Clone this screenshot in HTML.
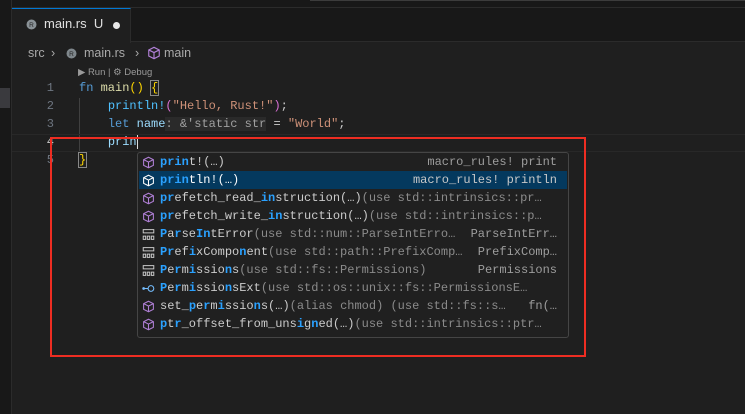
<!DOCTYPE html>
<html><head><style>
*{margin:0;padding:0;box-sizing:border-box}
body{width:745px;height:414px;background:#1f1f1f;overflow:hidden;position:relative;font-family:"Liberation Sans",sans-serif}
.abs{position:absolute}
.mono{font-family:"Liberation Mono","DejaVu Sans Mono",monospace;font-size:12px;white-space:pre}
.ln{position:absolute;left:40px;width:14px;text-align:right;color:#6e7681;font-family:"Liberation Mono",monospace;font-size:12px}
.code{position:absolute;left:79px}
.kw{color:#569cd6}.fn{color:#dcdcaa}.mac{color:#4fc1ff}.str{color:#ce9178}.br{color:#ffd700}.br2{color:#da70d6}.var{color:#9cdcfe}.hint{color:#a0a0a0;background:#2a2a2a}
.row{position:absolute;left:1px;right:1px;height:18px;line-height:18px;color:#cccccc}
.row .ic{position:absolute;left:3px;top:3px;width:13px;height:13px}
.row .t{position:absolute;left:21px}
.row .r{position:absolute;right:10px;color:#9d9d9d}
.m{color:#2aa1ff;font-weight:bold}
.g{color:#8b8b8b}
.sel{background:#04395e;color:#fff}
.sel .r{color:#c8c8c8}
</style></head><body>
<div class="abs" style="left:0;top:0;width:745px;height:42px;background:#181818;border-bottom:1px solid #2b2b2b"></div>
<div class="abs" style="left:0;top:7px;width:745px;height:1px;background:#2b2b2b"></div>
<div class="abs" style="left:310px;top:-2px;width:440px;height:3px;border:1px solid #3c3c3c"></div>
<div class="abs" style="left:0;top:0;width:12px;height:414px;background:#181818;border-right:1px solid #2b2b2b"></div>
<div class="abs" style="left:0;top:88px;width:10px;height:20px;background:#3a3a3e"></div>
<div class="abs" style="left:12px;top:8px;width:119px;height:35px;background:#1f1f1f;border-top:1px solid #0078d4;border-right:1px solid #2b2b2b"></div>
<svg class="abs" style="left:26px;top:19px" width="11" height="11" viewBox="0 0 11 11"><circle cx="5.5" cy="5.5" r="5" fill="#8a9297"/><text x="5.5" y="8" font-size="6.5" text-anchor="middle" fill="#1f1f1f" font-family="Liberation Sans">R</text></svg>
<div class="abs" style="left:44px;top:16px;font-size:13px;color:#e0e0e0">main.rs&nbsp; U</div>
<div class="abs" style="left:113px;top:22px;width:7px;height:7px;border-radius:50%;background:#e8e8e8"></div>
<div class="abs" style="left:28px;top:46px;font-size:12.5px;color:#a9a9a9">src</div>
<div class="abs" style="left:51px;top:46px;font-size:12.5px;color:#a9a9a9">›</div>
<div class="abs" style="left:84px;top:46px;font-size:12.5px;color:#a9a9a9">main.rs</div>
<div class="abs" style="left:135px;top:46px;font-size:12.5px;color:#a9a9a9">›</div>
<div class="abs" style="left:164px;top:46px;font-size:12.5px;color:#a9a9a9">main</div>
<svg class="abs" style="left:66px;top:48px" width="11" height="11" viewBox="0 0 11 11"><circle cx="5.5" cy="5.5" r="5" fill="#7f878c"/><text x="5.5" y="8" font-size="6.5" text-anchor="middle" fill="#1f1f1f">R</text></svg>
<svg class="abs" style="left:147px;top:46px" width="14" height="14" viewBox="0 0 16 16" fill="none" stroke="#b180d7" stroke-width="1.3"><path d="M8 1.5L14 4.5V11.5L8 14.5L2 11.5V4.5Z M2 4.5L8 7.5L14 4.5 M8 7.5V14.5"/></svg>
<div class="abs" style="left:78px;top:67px;font-size:9.5px;color:#9a9a9a">▶ Run | ⚙ Debug</div>

<div class="ln" style="top:81px">1</div>
<div class="ln" style="top:99px">2</div>
<div class="ln" style="top:117px">3</div>
<div class="ln" style="top:135px;color:#ccc">4</div>
<div class="ln" style="top:153px">5</div>
<div class="abs" style="left:79px;top:98px;width:1px;height:54px;background:#404040"></div>
<div class="abs" style="left:12px;top:134px;width:733px;height:18px;border-top:1px solid #282828;border-bottom:1px solid #282828"></div>
<div class="code mono" style="top:81px"><span class="kw">fn</span> <span class="fn">main</span><span class="br">()</span> <span class="br" style="outline:1px solid #888">{</span></div>
<div class="code mono" style="top:99px">    <span class="mac">println!</span><span class="br2">(</span><span class="str">"Hello, Rust!"</span><span class="br2">)</span><span style="color:#ccc">;</span></div>
<div class="code mono" style="top:117px">    <span class="kw">let</span> <span class="var">name</span><span class="hint">: &amp;'static str</span><span style="color:#ccc"> = </span><span class="str">"World"</span><span style="color:#ccc">;</span></div>
<div class="code mono" style="top:135px">    <span class="var">prin</span><span style="border-left:1.5px solid #ddd"></span></div>
<div class="code mono" style="top:153px"><span class="br" style="outline:1px solid #888">}</span></div>

<div class="abs mono" style="left:137px;top:152px;width:432px;height:186px;background:#202020;border:1px solid #454545;border-radius:3px">
<div class="row" style="top:0"><svg class="ic" viewBox="0 0 16 16" fill="none" stroke="#b180d7" stroke-width="1.3"><path d="M8 1.5L14 4.5V11.5L8 14.5L2 11.5V4.5Z M2 4.5L8 7.5L14 4.5 M8 7.5V14.5"/></svg><span class="t"><span class="m">prin</span>t!(…)</span><span class="r">macro_rules! print</span></div>
<div class="row sel" style="top:18px"><svg class="ic" viewBox="0 0 16 16" fill="none" stroke="#fff" stroke-width="1.3"><path d="M8 1.5L14 4.5V11.5L8 14.5L2 11.5V4.5Z M2 4.5L8 7.5L14 4.5 M8 7.5V14.5"/></svg><span class="t"><span class="m">prin</span>tln!(…)</span><span class="r">macro_rules! println</span></div>
<div class="row" style="top:36px"><svg class="ic" viewBox="0 0 16 16" fill="none" stroke="#b180d7" stroke-width="1.3"><path d="M8 1.5L14 4.5V11.5L8 14.5L2 11.5V4.5Z M2 4.5L8 7.5L14 4.5 M8 7.5V14.5"/></svg><span class="t"><span class="m">pr</span>efetch_read_<span class="m">in</span>struction(…)<span class="g">(use std::intrinsics::pr…</span></span></div>
<div class="row" style="top:54px"><svg class="ic" viewBox="0 0 16 16" fill="none" stroke="#b180d7" stroke-width="1.3"><path d="M8 1.5L14 4.5V11.5L8 14.5L2 11.5V4.5Z M2 4.5L8 7.5L14 4.5 M8 7.5V14.5"/></svg><span class="t"><span class="m">pr</span>efetch_write_<span class="m">in</span>struction(…)<span class="g">(use std::intrinsics::p…</span></span></div>
<div class="row" style="top:72px"><svg class="ic" viewBox="0 0 16 16" fill="none" stroke="#ccc" stroke-width="1.2"><rect x="1.5" y="2" width="13" height="4"/><rect x="1.5" y="10" width="3" height="4"/><rect x="6.5" y="10" width="3" height="4"/><rect x="11.5" y="10" width="3" height="4"/></svg><span class="t"><span class="m">P</span>a<span class="m">r</span>se<span class="m">In</span>tError<span class="g">(use std::num::ParseIntErro…</span></span><span class="r">ParseIntErr…</span></div>
<div class="row" style="top:90px"><svg class="ic" viewBox="0 0 16 16" fill="none" stroke="#ccc" stroke-width="1.2"><rect x="1.5" y="2" width="13" height="4"/><rect x="1.5" y="10" width="3" height="4"/><rect x="6.5" y="10" width="3" height="4"/><rect x="11.5" y="10" width="3" height="4"/></svg><span class="t"><span class="m">Pr</span>ef<span class="m">i</span>xCompo<span class="m">n</span>ent<span class="g">(use std::path::PrefixComp…</span></span><span class="r">PrefixComp…</span></div>
<div class="row" style="top:108px"><svg class="ic" viewBox="0 0 16 16" fill="none" stroke="#ccc" stroke-width="1.2"><rect x="1.5" y="2" width="13" height="4"/><rect x="1.5" y="10" width="3" height="4"/><rect x="6.5" y="10" width="3" height="4"/><rect x="11.5" y="10" width="3" height="4"/></svg><span class="t"><span class="m">P</span>e<span class="m">r</span>m<span class="m">i</span>ssio<span class="m">n</span>s<span class="g">(use std::fs::Permissions)</span></span><span class="r">Permissions</span></div>
<div class="row" style="top:126px"><svg class="ic" viewBox="0 0 16 16" fill="none" stroke="#75beff" stroke-width="1.3"><path d="M1 8H8"/><circle cx="11" cy="8" r="3.5"/><circle cx="2" cy="8" r="1" fill="#75beff"/></svg><span class="t"><span class="m">P</span>e<span class="m">r</span>m<span class="m">i</span>ssio<span class="m">n</span>sExt<span class="g">(use std::os::unix::fs::PermissionsE…</span></span></div>
<div class="row" style="top:144px"><svg class="ic" viewBox="0 0 16 16" fill="none" stroke="#b180d7" stroke-width="1.3"><path d="M8 1.5L14 4.5V11.5L8 14.5L2 11.5V4.5Z M2 4.5L8 7.5L14 4.5 M8 7.5V14.5"/></svg><span class="t">set_<span class="m">p</span>e<span class="m">r</span>m<span class="m">i</span>ssio<span class="m">n</span>s(…)<span class="g">(alias chmod) (use std::fs::s…</span></span><span class="r">fn(…</span></div>
<div class="row" style="top:162px"><svg class="ic" viewBox="0 0 16 16" fill="none" stroke="#b180d7" stroke-width="1.3"><path d="M8 1.5L14 4.5V11.5L8 14.5L2 11.5V4.5Z M2 4.5L8 7.5L14 4.5 M8 7.5V14.5"/></svg><span class="t"><span class="m">p</span>t<span class="m">r</span>_offset_from_uns<span class="m">i</span>g<span class="m">n</span>ed(…)<span class="g">(use std::intrinsics::ptr…</span></span></div>
</div>
<div class="abs" style="left:50px;top:137px;width:536px;height:220px;border:2.5px solid #ee2d22"></div>
</body></html>
